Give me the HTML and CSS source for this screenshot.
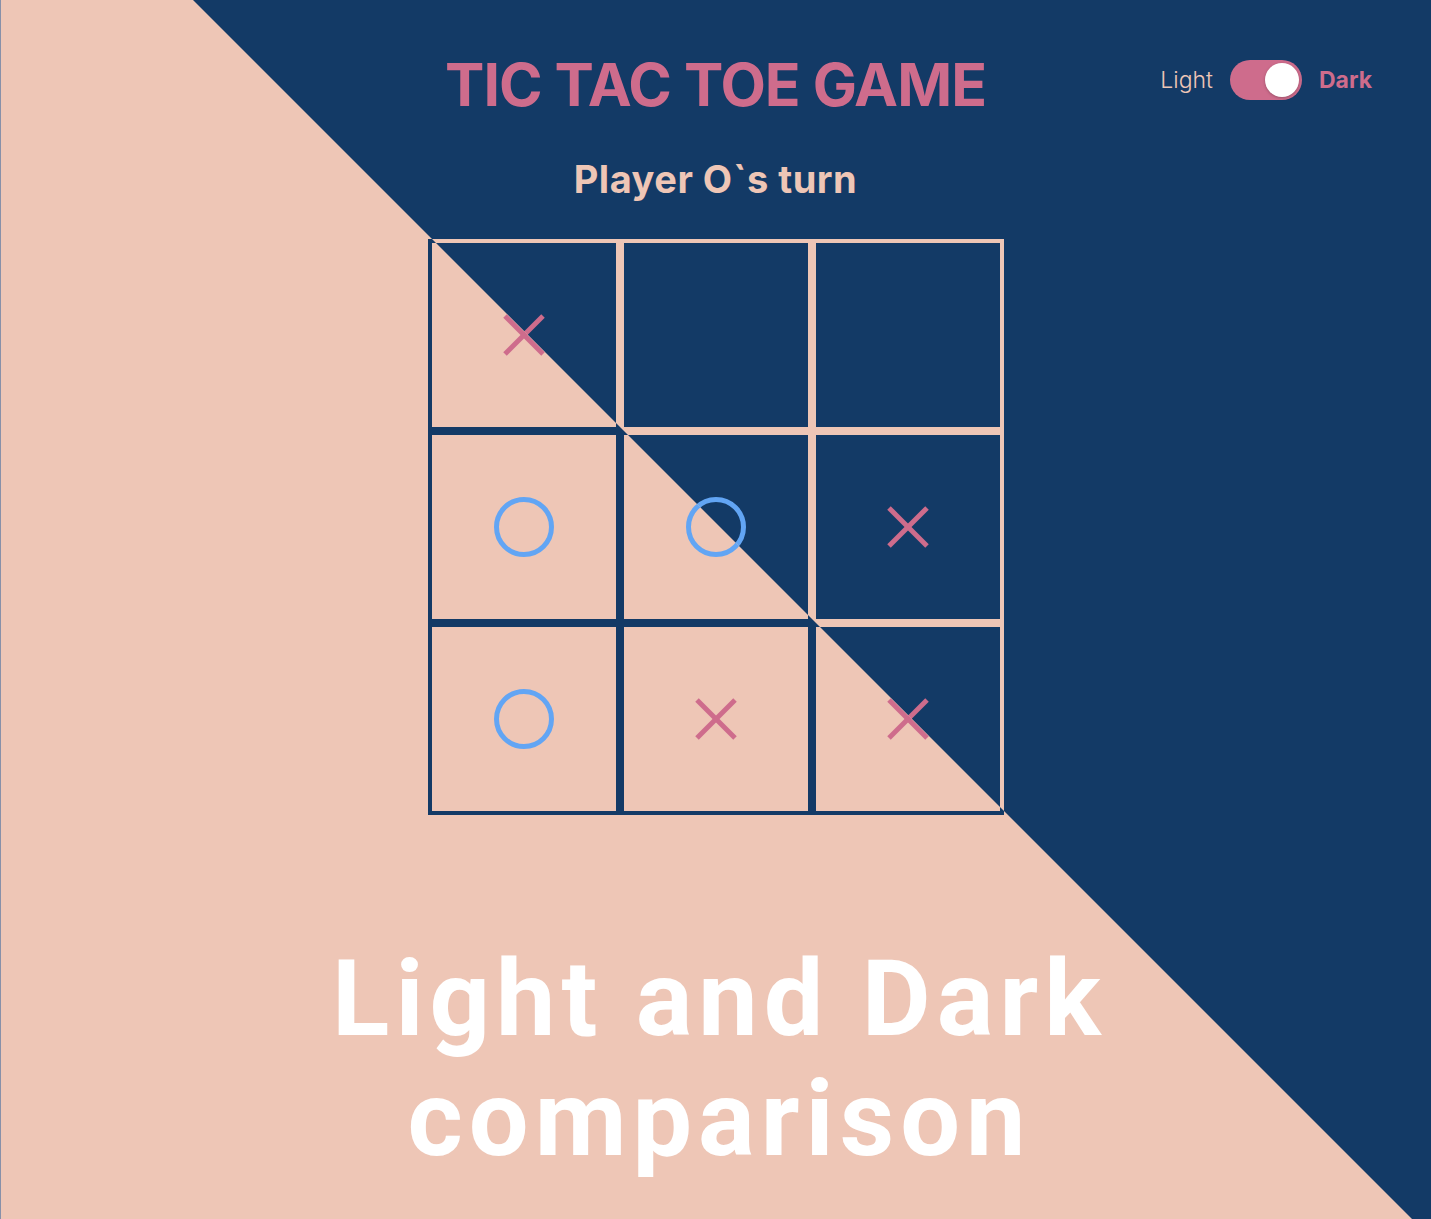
FILE: index.html
```html
<!DOCTYPE html>
<html lang="en">
<head>
<meta charset="utf-8">
<title>Tic Tac Toe – Light and Dark</title>
<link rel="stylesheet" href="styles.css">
</head>
<body>
<div class="stage">

  <div class="theme theme-dark">
    <div class="app">
      <header class="header">
        <div class="spacer"></div>
        <h1 class="title">TIC TAC TOE GAME</h1>
        <div class="mode">
          <span class="mode-light">Light</span>
          <span class="switch on"><span class="knob"></span></span>
          <span class="mode-dark">Dark</span>
        </div>
      </header>
      <p class="status">Player O`s turn</p>
      <div class="board">
        <div class="cell"><svg class="mark-x" viewBox="0 0 44 44"><line x1="3" y1="3" x2="41" y2="41"/><line x1="41" y1="3" x2="3" y2="41"/></svg></div>
        <div class="cell"></div>
        <div class="cell"></div>
        <div class="cell"><svg class="mark-o" viewBox="0 0 60 60"><circle cx="30" cy="30" r="27.5"/></svg></div>
        <div class="cell"><svg class="mark-o" viewBox="0 0 60 60"><circle cx="30" cy="30" r="27.5"/></svg></div>
        <div class="cell"><svg class="mark-x" viewBox="0 0 44 44"><line x1="3" y1="3" x2="41" y2="41"/><line x1="41" y1="3" x2="3" y2="41"/></svg></div>
        <div class="cell"><svg class="mark-o" viewBox="0 0 60 60"><circle cx="30" cy="30" r="27.5"/></svg></div>
        <div class="cell"><svg class="mark-x" viewBox="0 0 44 44"><line x1="3" y1="3" x2="41" y2="41"/><line x1="41" y1="3" x2="3" y2="41"/></svg></div>
        <div class="cell"><svg class="mark-x" viewBox="0 0 44 44"><line x1="3" y1="3" x2="41" y2="41"/><line x1="41" y1="3" x2="3" y2="41"/></svg></div>
      </div>
    </div>
  </div>

  <div class="theme theme-light">
    <div class="app">
      <header class="header">
        <div class="spacer"></div>
        <h1 class="title">TIC TAC TOE GAME</h1>
        <div class="mode">
          <span class="mode-light">Light</span>
          <span class="switch"><span class="knob"></span></span>
          <span class="mode-dark">Dark</span>
        </div>
      </header>
      <p class="status">Player O`s turn</p>
      <div class="board">
        <div class="cell"><svg class="mark-x" viewBox="0 0 44 44"><line x1="3" y1="3" x2="41" y2="41"/><line x1="41" y1="3" x2="3" y2="41"/></svg></div>
        <div class="cell"></div>
        <div class="cell"></div>
        <div class="cell"><svg class="mark-o" viewBox="0 0 60 60"><circle cx="30" cy="30" r="27.5"/></svg></div>
        <div class="cell"><svg class="mark-o" viewBox="0 0 60 60"><circle cx="30" cy="30" r="27.5"/></svg></div>
        <div class="cell"><svg class="mark-x" viewBox="0 0 44 44"><line x1="3" y1="3" x2="41" y2="41"/><line x1="41" y1="3" x2="3" y2="41"/></svg></div>
        <div class="cell"><svg class="mark-o" viewBox="0 0 60 60"><circle cx="30" cy="30" r="27.5"/></svg></div>
        <div class="cell"><svg class="mark-x" viewBox="0 0 44 44"><line x1="3" y1="3" x2="41" y2="41"/><line x1="41" y1="3" x2="3" y2="41"/></svg></div>
        <div class="cell"><svg class="mark-x" viewBox="0 0 44 44"><line x1="3" y1="3" x2="41" y2="41"/><line x1="41" y1="3" x2="3" y2="41"/></svg></div>
      </div>
      <p class="caption">Light and Dark<br>comparison</p>
    </div>
  </div>

</div>
</body>
</html>
```

FILE: styles.css
```css
html, body {
  margin: 0;
  padding: 0;
  overflow: hidden;
}

body {
  font-family: Inter, "Noto Sans", "Liberation Sans", sans-serif;
}

.stage {
  position: relative;
  width: 100%;
  height: 100vh;
  overflow: hidden;
}

.theme {
  --navy: #133a66;
  --peach: #eec6b6;
  --pink: #ce6c8c;
  --blue: #62a5f4;
  height: 100%;
}

.theme-dark {
  background: var(--navy);
  --line: var(--peach);
  --text: var(--peach);
}

.theme-light {
  position: absolute;
  inset: 0;
  background: var(--peach);
  --line: var(--navy);
  --text: var(--navy);
  clip-path: polygon(0 0, 193px 0, 2193px 2000px, 0 2000px);
  box-shadow: inset 1px 0 0 #8790a9;
}

.app {
  display: flex;
  flex-direction: column;
  align-items: center;
}

.header {
  width: 100%;
  box-sizing: border-box;
  display: grid;
  grid-template-columns: 1fr auto 1fr;
  align-items: center;
  padding: 55px 59px 0 59px;
}

.title {
  margin: 0;
  font-size: 59px;
  line-height: 59px;
  font-weight: 700;
  color: var(--pink);
  letter-spacing: -1px;
  white-space: nowrap;
}

.mode {
  justify-self: end;
  display: flex;
  align-items: center;
  gap: 17px;
  margin-bottom: 9px;
  font-size: 23px;
}

.mode-light {
  font-weight: 300;
  color: var(--peach);
}

.mode-dark {
  font-weight: 700;
  color: var(--pink);
}

.switch {
  width: 72px;
  height: 40px;
  border-radius: 20px;
  background: var(--pink);
  display: flex;
  align-items: center;
  padding: 0 3px;
  box-sizing: border-box;
}

.switch.on {
  justify-content: flex-end;
}

.knob {
  width: 34px;
  height: 34px;
  border-radius: 50%;
  background: #fff;
  box-shadow: 0 1px 3px rgba(0, 0, 0, 0.25);
}

.status {
  margin: 46px 0 0 0;
  font-size: 38px;
  line-height: 38px;
  font-weight: 700;
  color: var(--text);
  letter-spacing: 0.5px;
}

.board {
  margin-top: 41px;
  display: grid;
  grid-template-columns: repeat(3, 192px);
  grid-template-rows: repeat(3, 192px);
}

.cell {
  box-sizing: border-box;
  border: 4px solid var(--line);
  display: flex;
  align-items: center;
  justify-content: center;
}

.mark-x {
  width: 44px;
  height: 44px;
  stroke: var(--pink);
  stroke-width: 5;
  fill: none;
}

.mark-o {
  width: 60px;
  height: 60px;
  stroke: var(--blue);
  stroke-width: 5;
  fill: none;
}

.caption {
  margin: 124px 0 0 0;
  padding-left: 8px;
  font-family: Roboto, "Liberation Sans", sans-serif;
  font-size: 106px;
  line-height: 120px;
  font-weight: 700;
  color: #ffffff;
  letter-spacing: 6px;
  text-align: center;
}
```
